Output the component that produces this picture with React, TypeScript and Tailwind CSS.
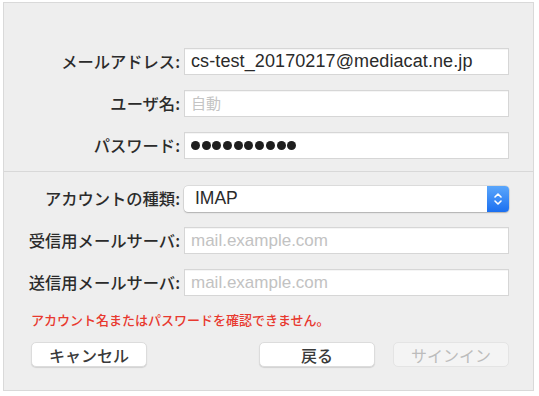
import React from "react";

const jp = "font-['Hiragino_Sans','Noto_Sans_CJK_JP','Noto_Sans',sans-serif]";
const latin = "font-['Liberation_Sans','Noto_Sans_CJK_JP',sans-serif]";

function Label({ children }: { children: React.ReactNode }) {
  return (
    <div className={`w-[176px] shrink-0 text-right text-[16.3px] font-medium text-[#2b2b2b] leading-none whitespace-nowrap ${jp}`}>
      {children}
    </div>
  );
}

function Field({ label, children }: { label: string; children: React.ReactNode }) {
  return (
    <div className="flex items-center h-[27px] gap-[4px]">
      <Label>{label}</Label>
      <div className="w-[325px] h-[27px] bg-white border border-[#d6d6d6] shadow-[inset_0_1px_0_rgba(0,0,0,0.04)] flex items-center px-[6px]">
        {children}
      </div>
    </div>
  );
}

function Button({ label, disabled }: { label: string; disabled?: boolean }) {
  return (
    <div
      className={`w-[116px] h-[25px] rounded-[5px] flex items-center justify-center text-[16px] leading-none ${jp} ${
        disabled
          ? "bg-[#f4f4f4] text-[#bcbcbc] border border-[#e4e4e4]"
          : "bg-white text-[#3a3a3a] font-medium border border-[#dcdcdc] shadow-[0_1px_1px_rgba(0,0,0,0.12)]"
      }`}
    >
      {label}
    </div>
  );
}

export default function App() {
  return (
    <div className="w-[539px] h-[396px] bg-white pt-[2px] pl-[3px]">
      <div className="w-[531px] h-[389px] bg-[#eeeeee] border border-[#d9d9d9] flex flex-col">
        <div className="pt-[45px] flex flex-col gap-[15px]">
          <Field label="メールアドレス:">
            <span className={`text-[18px] text-[#2a2a2a] tracking-[0.1px] ${latin}`}>cs-test_20170217@mediacat.ne.jp</span>
          </Field>
          <Field label="ユーザ名:">
            <span className={`text-[15px] text-[#c4c4c4] ${jp}`}>自動</span>
          </Field>
          <Field label="パスワード:">
            <div className="flex gap-[1.7px]">
              {Array.from({ length: 10 }).map((_, i) => (
                <div key={i} className="w-[9px] h-[9px] rounded-full bg-[#1e1e1e]" />
              ))}
            </div>
          </Field>
        </div>

        <div className="mt-[12px] h-px bg-[#d8d8d8]" />

        <div className="pt-[13px] flex flex-col gap-[15px]">
          <div className="flex items-center h-[27px] gap-[4px]">
            <Label>アカウントの種類:</Label>
            <div className="w-[325px] h-[26px] bg-white rounded-[4px] shadow-[0_0_0_0.5px_rgba(0,0,0,0.15),0_1px_1.5px_rgba(0,0,0,0.2)] flex items-center">
              <span className={`flex-1 pl-[11px] text-[17.5px] text-[#2a2a2a] ${latin}`}>IMAP</span>
              <div className="w-[22px] h-[26px] rounded-r-[4px] bg-gradient-to-b from-[#5aa6fb] to-[#1a6ff0] flex items-center justify-center">
                <svg width="10" height="16" viewBox="0 0 10 16" fill="none" stroke="white" strokeWidth="1.6" strokeLinecap="round" strokeLinejoin="round">
                  <path d="M2 6 L5 3 L8 6" />
                  <path d="M2 10 L5 13 L8 10" />
                </svg>
              </div>
            </div>
          </div>
          <Field label="受信用メールサーバ:">
            <span className={`text-[17px] text-[#c2c2c2] ${latin}`}>mail.example.com</span>
          </Field>
          <Field label="送信用メールサーバ:">
            <span className={`text-[17px] text-[#c2c2c2] ${latin}`}>mail.example.com</span>
          </Field>
        </div>

        <div className={`mt-[17px] pl-[27px] text-[13px] font-medium text-[#e8392f] leading-none ${jp}`}>
          アカウント名またはパスワードを確認できません。
        </div>

        <div className="mt-[16px] flex pl-[27px]">
          <Button label="キャンセル" />
          <div className="ml-[112px]">
            <Button label="戻る" />
          </div>
          <div className="ml-[18px]">
            <Button label="サインイン" disabled />
          </div>
        </div>
      </div>
    </div>
  );
}
